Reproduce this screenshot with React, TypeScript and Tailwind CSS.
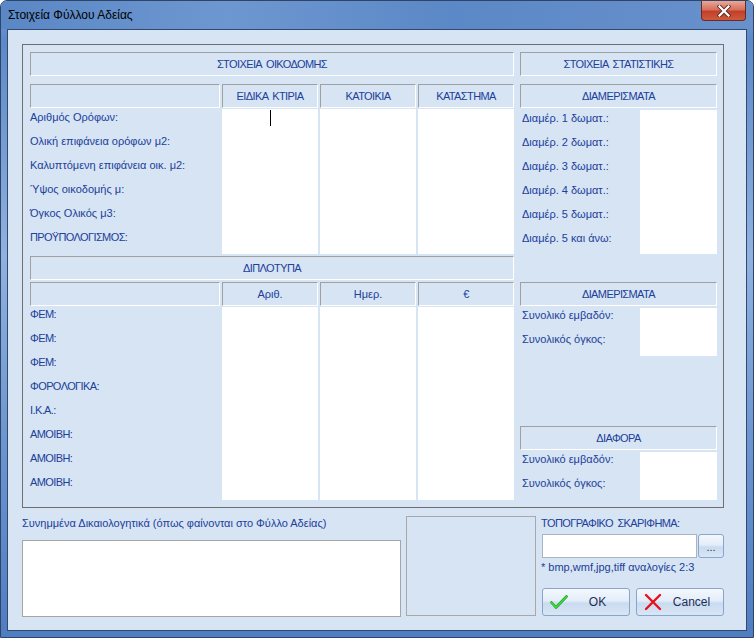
import React from 'react';

const INK = 'text-[#21409a]';

const Bar: React.FC<{ children?: React.ReactNode; className?: string }> = ({ children, className = '' }) => (
  <div
    className={`h-[24px] flex items-center justify-center border border-t-[#a0a0a0] border-l-[#a0a0a0] border-r-white border-b-white text-[11px] tracking-[-0.6px] [word-spacing:2px] ${INK} ${className}`}
  >
    {children}
  </div>
);

const Row: React.FC<{ children: React.ReactNode; caps?: boolean }> = ({ children, caps }) => (
  <div className={`h-[24px] leading-[14px] text-[11px] whitespace-nowrap ${INK} ${caps ? 'tracking-[-0.6px]' : ''}`}>
    {children}
  </div>
);

const buildingLabels = [
  'Αριθμός Ορόφων:',
  'Ολική επιφάνεια ορόφων μ2:',
  'Καλυπτόμενη επιφάνεια οικ. μ2:',
  'Ύψος οικοδομής μ:',
  'Όγκος Ολικός μ3:',
];

const copyLabels = ['ΦΕΜ:', 'ΦΕΜ:', 'ΦΕΜ:', 'ΦΟΡΟΛΟΓΙΚΑ:', 'Ι.Κ.Α.:', 'ΑΜΟΙΒΗ:', 'ΑΜΟΙΒΗ:', 'ΑΜΟΙΒΗ:'];

const flatLabels = [
  'Διαμέρ. 1 δωματ.:',
  'Διαμέρ. 2 δωματ.:',
  'Διαμέρ. 3 δωματ.:',
  'Διαμέρ. 4 δωματ.:',
  'Διαμέρ. 5 δωματ.:',
  'Διαμέρ. 5 και άνω:',
];

const CheckIcon = () => (
  <svg width="18" height="16" viewBox="0 0 18 16">
    <path d="M1.5 8.5 L6 13.5 L16.5 2.5" fill="none" stroke="#1f9a1f" strokeWidth="2.6" strokeLinecap="round" strokeLinejoin="round" />
    <path d="M1.5 8.5 L6 13.5 L16.5 2.5" fill="none" stroke="#3be03b" strokeWidth="1.4" strokeLinecap="round" strokeLinejoin="round" />
  </svg>
);

const CrossIcon = () => (
  <svg width="18" height="18" viewBox="0 0 18 18">
    <path d="M2 2 L16 16 M16 2 L2 16" fill="none" stroke="#e8121c" strokeWidth="2.4" strokeLinecap="round" />
  </svg>
);

const Btn: React.FC<{ icon: React.ReactNode; label: string }> = ({ icon, label }) => (
  <button className="w-[88px] h-[28px] flex items-center pl-[7px] rounded-[3px] border border-[#8aa5cb] bg-[linear-gradient(to_bottom,#f4f8fd_0%,#e3edf9_45%,#c9dbf0_55%,#d9e6f5_100%)] text-[12px] text-[#1e2f55]">
    <span className="w-[18px] flex items-center justify-center">{icon}</span>
    <span className="flex-1 text-center pr-[2px]">{label}</span>
  </button>
);

export default function App() {
  return (
    <div className="w-[754px] h-[638px] flex flex-col rounded-t-[7px] border border-[#2f4466] bg-[linear-gradient(to_bottom,#7aa2d8_0%,#5c89c7_6%,#8fb2e0_40%,#6b95cf_70%,#4f7dc1_100%)] font-['Liberation_Sans',Arial,sans-serif] overflow-hidden">
      {/* title bar */}
      <div className="h-[28px] flex items-start bg-[linear-gradient(to_right,#5a87c5,#6d97d0_30%,#5b88c6_60%,#6891cc)]">
        <div className="pl-[7px] pt-[6px] text-[12px] leading-[16px] text-black">Στοιχεία Φύλλου Αδείας</div>
        <div className="ml-auto mr-[7px] w-[45px] h-[20px] flex items-center justify-center rounded-b-[4px] border border-t-0 border-[#6b2a22] bg-[linear-gradient(to_bottom,#e9a898_0%,#d7705c_45%,#c1402a_55%,#cf5a3c_100%)]">
          <svg width="14" height="12" viewBox="0 0 14 12">
            <path d="M2.5 1.5 L11.5 10.5 M11.5 1.5 L2.5 10.5" stroke="#5a2a24" strokeWidth="4" strokeLinecap="square" />
            <path d="M2.5 1.5 L11.5 10.5 M11.5 1.5 L2.5 10.5" stroke="#ffffff" strokeWidth="2.2" strokeLinecap="square" />
          </svg>
        </div>
      </div>

      {/* client area */}
      <div className="mx-[6px] h-[602px] border border-[#32496f] bg-[#d6e4f3] pl-[14px] pt-[14px]">
        {/* group box */}
        <div className="w-[702px] h-[464px] border border-[#6f6f6f] pl-[7px] pt-[7px] flex gap-[6px]">
          {/* left column */}
          <div className="w-[484px] flex flex-col">
            <Bar>ΣΤΟΙΧΕΙΑ ΟΙΚΟΔΟΜΗΣ</Bar>
            <div className="mt-[8px] flex gap-[2px]">
              <Bar className="w-[190px]" />
              <Bar className="w-[96px]">ΕΙΔΙΚΑ ΚΤΙΡΙΑ</Bar>
              <Bar className="w-[96px]">ΚΑΤΟΙΚΙΑ</Bar>
              <Bar className="w-[96px]">ΚΑΤΑΣΤΗΜΑ</Bar>
            </div>
            <div className="mt-[1px] h-[145px] flex gap-[2px]">
              <div className="w-[190px] pt-[1px]">
                {buildingLabels.map((l, i) => (
                  <Row key={i}>{l}</Row>
                ))}
                <Row caps>ΠΡΟΫΠΟΛΟΓΙΣΜΟΣ:</Row>
              </div>
              <div className="w-[96px] bg-white relative">
                <div className="absolute left-[48px] top-[1px] w-[1px] h-[16px] bg-black" />
              </div>
              <div className="w-[96px] bg-white" />
              <div className="w-[96px] bg-white" />
            </div>

            <Bar className="mt-[2px]">ΔΙΠΛΟΤΥΠΑ</Bar>
            <div className="mt-[2px] flex gap-[2px]">
              <Bar className="w-[190px]" />
              <Bar className="w-[96px] tracking-normal">Αριθ.</Bar>
              <Bar className="w-[96px] tracking-normal">Ημερ.</Bar>
              <Bar className="w-[96px]">€</Bar>
            </div>
            <div className="mt-[1px] h-[193px] flex gap-[2px]">
              <div className="w-[190px]">
                {copyLabels.map((l, i) => (
                  <Row key={i} caps>
                    {l}
                  </Row>
                ))}
              </div>
              <div className="w-[96px] bg-white" />
              <div className="w-[96px] bg-white" />
              <div className="w-[96px] bg-white" />
            </div>
          </div>

          {/* right column */}
          <div className="w-[197px] flex flex-col">
            <Bar>ΣΤΟΙΧΕΙΑ ΣΤΑΤΙΣΤΙΚΗΣ</Bar>
            <Bar className="mt-[8px]">ΔΙΑΜΕΡΙΣΜΑΤΑ</Bar>
            <div className="mt-[2px] h-[144px] flex">
              <div className="w-[120px] pl-[2px] pt-[1px]">
                {flatLabels.map((l, i) => (
                  <Row key={i}>{l}</Row>
                ))}
              </div>
              <div className="w-[77px] bg-white" />
            </div>

            <Bar className="mt-[28px]">ΔΙΑΜΕΡΙΣΜΑΤΑ</Bar>
            <div className="mt-[2px] h-[48px] flex">
              <div className="w-[120px] pl-[2px]">
                <Row>Συνολικό εμβαδόν:</Row>
                <Row>Συνολικός όγκος:</Row>
              </div>
              <div className="w-[77px] bg-white" />
            </div>

            <Bar className="mt-[70px]">ΔΙΑΦΟΡΑ</Bar>
            <div className="mt-[2px] h-[48px] flex">
              <div className="w-[120px] pl-[2px]">
                <Row>Συνολικό εμβαδόν:</Row>
                <Row>Συνολικός όγκος:</Row>
              </div>
              <div className="w-[77px] bg-white" />
            </div>
          </div>
        </div>

        {/* bottom area */}
        <div className="mt-[8px] flex">
          <div className="w-[379px] flex flex-col">
            <div className={`h-[14px] leading-[14px] text-[11px] whitespace-nowrap ${INK}`}>
              Συνημμένα Δικαιολογητικά (όπως φαίνονται στο Φύλλο Αδείας)
            </div>
            <div className="mt-[10px] h-[77px] bg-white border border-[#a5a5a5]" />
          </div>

          <div className="ml-[5px] w-[130px] h-[100px] border border-[#a8a8a8]" />

          <div className="ml-[5px] w-[183px] flex flex-col">
            <div className={`h-[14px] leading-[14px] text-[11px] tracking-[-0.6px] [word-spacing:2px] whitespace-nowrap ${INK}`}>
              ΤΟΠΟΓΡΑΦΙΚΟ ΣΚΑΡΙΦΗΜΑ:
            </div>
            <div className="mt-[4px] ml-[1px] flex gap-[1px]">
              <div className="w-[155px] h-[24px] bg-white border border-[#a9b4c2]" />
              <button className="w-[26px] h-[24px] rounded-[3px] border border-[#8aa5cb] bg-[linear-gradient(to_bottom,#f4f8fd_0%,#e3edf9_45%,#c9dbf0_55%,#d9e6f5_100%)] text-[11px] leading-[14px] text-[#1e2f55] pt-[2px]">
                ...
              </button>
            </div>
            <div className={`mt-[2px] h-[14px] leading-[14px] text-[11px] whitespace-nowrap ${INK}`}>
              * bmp,wmf,jpg,tiff αναλογίες 2:3
            </div>
            <div className="mt-[14px] ml-[1px] flex gap-[6px]">
              <Btn icon={<CheckIcon />} label="OK" />
              <Btn icon={<CrossIcon />} label="Cancel" />
            </div>
          </div>
        </div>
      </div>
    </div>
  );
}
